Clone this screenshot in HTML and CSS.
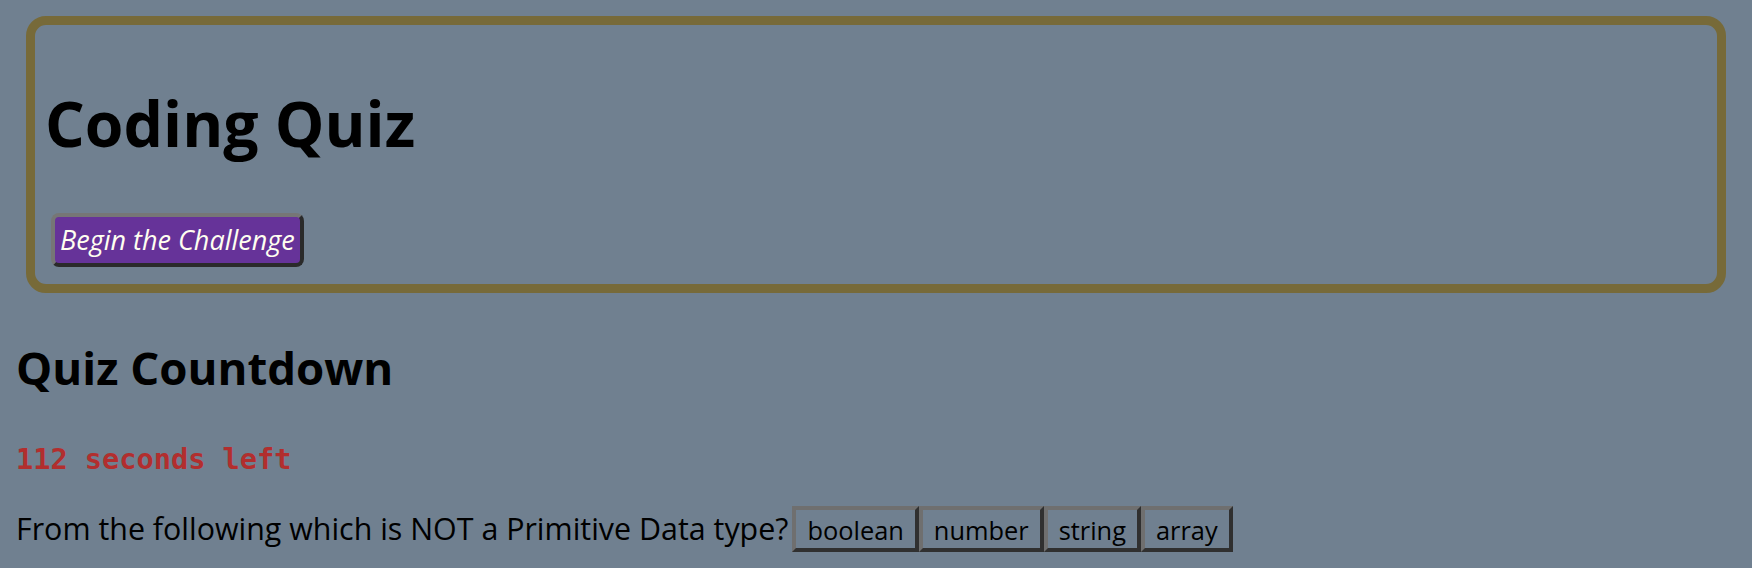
FILE: index.html
```html
<!DOCTYPE html>
<html lang="en">
<head>
<meta charset="utf-8">
<title>Coding Quiz</title>
<link rel="stylesheet" href="styles.css">
</head>
<body>
  <header class="intro">
    <h1 class="title">Coding Quiz</h1>
    <button class="start-btn" type="button">Begin the Challenge</button>
  </header>
  <main class="quiz">
    <h2 class="countdown-title">Quiz Countdown</h2>
    <p class="timer">112 seconds left</p>
    <div class="question-row">
      <span class="question">From the following which is NOT a Primitive Data type?</span>
      <div class="choices"><button class="choice" type="button">boolean</button><button class="choice" type="button">number</button><button class="choice" type="button">string</button><button class="choice" type="button">array</button></div>
    </div>
  </main>
</body>
</html>
```

FILE: styles.css
```css
html, body {
  background: #708090;
}

body {
  margin: 16px;
  font-family: "Open Sans", "Noto Sans", sans-serif;
  color: #000;
}

.intro {
  margin: 0 10px;
  border: 9px solid #776a39;
  border-radius: 20px;
  padding: 12px 10px 11px;
  display: flex;
  flex-direction: column;
  align-items: flex-start;
}

.title {
  margin: 43px 0 42px;
  font-size: 62.5px;
  line-height: 85px;
  font-weight: 700;
}

.start-btn {
  margin: 6px;
  height: 54px;
  padding: 5px 5px;
  border: 4px solid;
  border-color: #767676 #2a2a2a #2a2a2a #767676;
  border-radius: 8px;
  background: #663399;
  color: #fffff0;
  font-family: "Open Sans", "Noto Sans", sans-serif;
  font-style: italic;
  font-size: 27px;
  line-height: 36px;
  cursor: pointer;
}

.countdown-title {
  margin: 42px 0 0;
  font-size: 45.6px;
  line-height: 64px;
  font-weight: 700;
}

.timer {
  margin: 43px 0 30px;
  font-family: "DejaVu Sans Mono", "Liberation Mono", monospace;
  font-weight: 700;
  font-size: 28.6px;
  line-height: 34px;
  color: #b22e2e;
}

.question-row {
  display: flex;
  align-items: baseline;
}

.question {
  font-size: 30.4px;
}

.choices {
  display: flex;
  align-items: baseline;
  margin-left: 4px;
}

.choice {
  margin: 0;
  padding: 3px 11px 1px;
  border: 4px solid;
  border-color: #6f6f6f #303030 #303030 #6f6f6f;
  background: transparent;
  color: #000;
  font-family: "Open Sans", "Noto Sans", sans-serif;
  font-size: 25.4px;
  line-height: 34px;
  cursor: pointer;
}
```
